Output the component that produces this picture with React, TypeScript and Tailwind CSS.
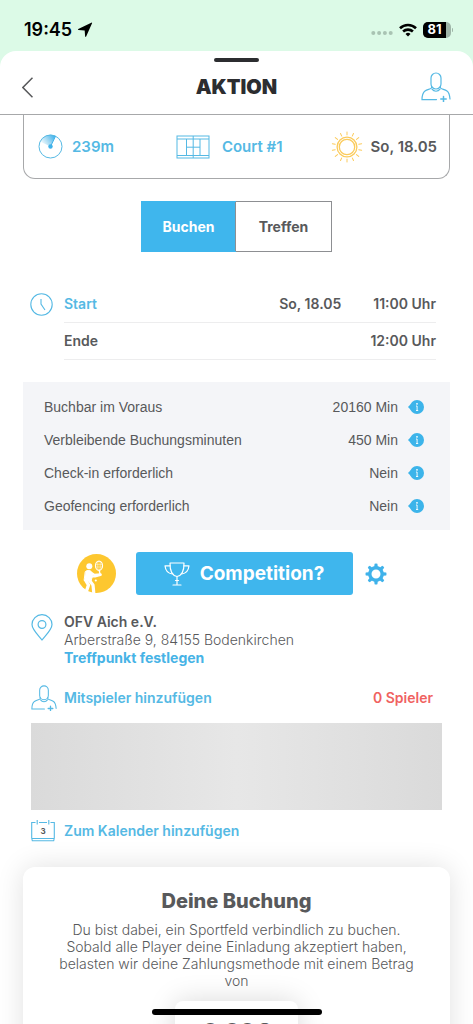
import { useState } from "react";
import type { ReactNode } from "react";

function StatusBar() {
  return (
    <div className="flex h-[51px] shrink-0 items-center justify-between pt-2 pr-5 pl-6 text-black">
      <div className="flex items-center gap-[5px]">
        <span className="text-[18px] font-semibold">19:45</span>
        <svg width="16" height="16" viewBox="0 0 15 15" aria-hidden="true">
          <path d="M14.2 .9 8.6 13.6Q8 14.6 7.6 13.3L7.2 8 1.5 7.6Q.2 7.2 1.2 6.6L13.4.7Q14.3.2 14.2.9Z" fill="#000" />
        </svg>
      </div>
      <div className="flex items-center gap-[6px]">
        <svg width="22" height="10" viewBox="0 0 22 10" aria-hidden="true" fill="#a9c3b3">
          <circle cx="2.300" cy="8" r="2" />
          <circle cx="8.100" cy="8" r="2" />
          <circle cx="13.900" cy="8" r="2" />
          <circle cx="19.700" cy="8" r="2" />
        </svg>
        <svg width="18" height="14" viewBox="0 0 18 14" aria-hidden="true" fill="none" stroke="#000" strokeWidth="2.6">
          <path d="M1 5.2a11.6 11.6 0 0 1 16 0" />
          <path d="M4.1 8.5a7.2 7.2 0 0 1 9.8 0" />
          <path d="M9 13.4 6.5 10.9a3.7 3.7 0 0 1 5 0Z" fill="#000" stroke="none" />
        </svg>
        <div className="flex items-center gap-px">
          <div className="flex h-4 w-7 overflow-hidden rounded-[5px] bg-[#9fb5a8]">
            <span className="flex w-[23px] items-center justify-center bg-black text-[13px] leading-none font-bold text-white">81</span>
          </div>
          <span className="h-1 w-px rounded-r bg-[#9fb5a8]" />
        </div>
      </div>
    </div>
  );
}

function PersonAddIcon({ className }: { className: string }) {
  return (
    <svg className={className} viewBox="0 0 30 30" fill="none" stroke="#55b9e4" strokeWidth="1.2" strokeLinecap="round" aria-hidden="true">
      <rect x="10" y="1" width="10" height="16" rx="5" />
      <path d="M10.6 14.2v1.6C9.6 17.4 6.500 17.2 4 19 1.800 20.800 1 23.500 1 27.600h14.500" />
      <path d="M19.400 14.200v1.600c1 1.600 4.100 1.400 6.600 3.200 1.800 1.300 2.700 4 3 8" />
      <path d="M11 17.200c2 2.700 6 2.700 8 0" />
      <path d="M22.500 24.500v5.200M19.800 27.100h5.400" strokeWidth="1.500" />
    </svg>
  );
}

function RadarIcon() {
  return (
    <svg width="25" height="25" viewBox="0 0 25 25" aria-hidden="true">
      <defs>
        <linearGradient id="sweep" x1="0" y1="0.700" x2="1" y2="0.200">
          <stop offset="0" stopColor="#55b9e4" stopOpacity="0" />
          <stop offset="1" stopColor="#3cb0ec" />
        </linearGradient>
      </defs>
      <path d="M12.500 12.500 2 7.500A11.600 11.600 0 0 1 17.600 2.100Z" fill="url(#sweep)" />
      <circle cx="12.500" cy="12.500" r="11.500" fill="none" stroke="#55b9e4" />
      <path d="M12.500 12.500 17.500 2.300" stroke="#3fb2ea" />
      <circle cx="12.500" cy="12.500" r="2.200" fill="#3fb2ea" />
    </svg>
  );
}

function CourtIcon() {
  return (
    <svg width="34" height="24" viewBox="0 0 34 24" fill="none" stroke="#55b9e4" aria-hidden="true">
      <rect x="1" y="1" width="32" height="22" />
      <path d="M1 4h32M1 20.500h32M10.500 4v16.500M24 4v16.500M17.200 1v22M10.500 12.200H24" />
    </svg>
  );
}

function SunIcon() {
  const rays = Array.from({ length: 14 }, (_, i) => (i * 360) / 14);
  return (
    <svg width="32" height="32" viewBox="0 0 32 32" fill="none" stroke="#fbcb5c" aria-hidden="true">
      <circle cx="16" cy="16" r="9.900" strokeWidth="1.300" />
      <circle cx="16" cy="16" r="7.700" strokeWidth="1.300" />
      {rays.map((a) => (
        <path key={a} d="M16 1v2.900" strokeLinecap="round" transform={`rotate(${a} 16 16)`} />
      ))}
    </svg>
  );
}

function ClockIcon() {
  return (
    <svg width="23" height="23" viewBox="0 0 23 23" fill="none" stroke="#55b9e4" strokeWidth="1.100" aria-hidden="true">
      <circle cx="11.500" cy="11.500" r="10.700" />
      <path d="M11 6v5l4 6" />
    </svg>
  );
}

function InfoIcon() {
  return (
    <svg width="16" height="14" viewBox="0 0 16 14" aria-hidden="true">
      <path d="M0 7 3.400 3.500v7Z" fill="#3cb4ea" />
      <circle cx="9" cy="7" r="7" fill="#3cb4ea" />
      <circle cx="9" cy="3.800" r=".9" fill="#fff" />
      <path d="M8 6h1.100v4.500M8 10.500h2.200" fill="none" stroke="#fff" strokeWidth=".9" />
    </svg>
  );
}

function PlayerIcon() {
  return (
    <svg width="39" height="39" viewBox="0 0 39 39" aria-hidden="true">
      <circle cx="19.500" cy="19.500" r="19.500" fill="#fdc72f" />
      <g stroke="#fff" fill="none" strokeLinecap="round" strokeLinejoin="round">
        <circle cx="12.300" cy="12.300" r="3" fill="#fff" stroke="none" />
        <path d="M8.500 17.500c2-1.800 5-1.300 6 .5l1.500 2.500-2 6.500-6.500-.5Z" fill="#fff" strokeWidth="1" />
        <path d="M13.500 18.500l4 2.500 6-.5" strokeWidth="2.500" />
        <path d="M14.500 22.500l3.500 0 5.500-1.500" strokeWidth="2" />
        <path d="M8.800 26.500 11.500 31l-1.700 5" strokeWidth="3.400" />
        <path d="M12.500 26.500l3.500 4.500.7 7" strokeWidth="3.200" />
        <ellipse cx="22" cy="11.700" rx="3.500" ry="4.600" strokeWidth="1.200" />
        <path d="M20.500 8.500v6.500M22 7.500v8M23.500 8.500v6.500M19 10.500h6M19 13h6" strokeWidth=".35" />
        <path d="M22.300 16.300l.8 5" strokeWidth="1.400" />
        <circle cx="18.800" cy="26.500" r="1.100" fill="#fff" stroke="none" />
      </g>
    </svg>
  );
}

function TrophyIcon() {
  return (
    <svg width="26" height="24" viewBox="0 0 26 24" fill="none" stroke="#fff" strokeWidth="1.200" strokeLinecap="round" strokeLinejoin="round" aria-hidden="true">
      <path d="M6 1h14c.1 6-1.700 12.500-7 13.500C7.700 13.500 5.900 7 6 1Z" />
      <path d="M6 3.800H1c.5 5 3.200 7.700 7.300 8.200M20 3.800h5c-.5 5-3.200 7.700-7.300 8.200" />
      <path d="M13 14.500V22M9 23h8M11.500 18.500h3" />
    </svg>
  );
}

function GearIcon() {
  const teeth = [0, 45, 90, 135, 180, 225, 270, 315];
  return (
    <svg width="22" height="22" viewBox="0 0 22 22" aria-hidden="true">
      <circle cx="11" cy="11" r="6.200" fill="none" stroke="#3fb2ea" strokeWidth="3.400" />
      {teeth.map((a) => (
        <path key={a} d="M9.200 4 9.600.8q1.400-.7 2.800 0L12.800 4Z" fill="#3fb2ea" transform={`rotate(${a} 11 11)`} />
      ))}
    </svg>
  );
}

function PinIcon() {
  return (
    <svg width="22" height="27" viewBox="0 0 22 27" fill="none" stroke="#55b9e4" strokeWidth="1.200" aria-hidden="true">
      <path d="M11 26C7 21 1 15.500 1 10.500a10 9.800 0 0 1 20 0C21 15.500 15 21 11 26Z" />
      <circle cx="11" cy="10.500" r="3.900" />
    </svg>
  );
}

function CalendarIcon() {
  return (
    <svg width="24" height="22" viewBox="0 0 24 22" fill="none" stroke="#55b9e4" strokeWidth="1.100" aria-hidden="true">
      <path d="M4.500 2.500H.7V18l.6 2.800h21.400l.6-2.800V2.500h-3.800M8 2.500h8M.7 18.500h22.600" />
      <path d="M6.200 0v4.500M17.800 0v4.500" />
      <text x="12" y="14" textAnchor="middle" fontSize="8" fontWeight="700" fill="#58595b" stroke="none">3</text>
    </svg>
  );
}

function InfoRow({ label, value }: { label: string; value: string }) {
  return (
    <div className="flex h-[33px] items-center">
      <dt className="grow">{label}</dt>
      <dd className="flex items-center gap-[10px]">
        {value}
        <button type="button" aria-label={`Info: ${label}`}>
          <InfoIcon />
        </button>
      </dd>
    </div>
  );
}

function IconRow({ icon, children }: { icon: ReactNode; children: ReactNode }) {
  return (
    <div className="flex items-center pr-10 pl-[31px]">
      <span className="flex w-[33px] shrink-0">{icon}</span>
      {children}
    </div>
  );
}

export default function App() {
  const [mode, setMode] = useState("Buchen");
  return (
    <div className="relative flex h-dvh flex-col overflow-hidden bg-[#dcfae7] font-['Inter',sans-serif] text-[14px] leading-5 text-[#58595b]">
      <StatusBar />
      <div className="flex min-h-0 grow flex-col rounded-t-2xl bg-white">
        <header className="flex h-16 shrink-0 flex-col border-b border-[#a7a8aa]">
          <span className="mx-auto mt-[7px] h-1 w-[45px] shrink-0 rounded-full bg-[#2c2d30]" />
          <div className="grid grow grid-cols-3 items-center px-[22px] pb-[2px]">
            <button type="button" aria-label="Zurück" className="justify-self-start">
              <svg width="11" height="21" viewBox="0 0 11 21" fill="none" stroke="#58595b" strokeWidth="1.500" aria-hidden="true">
                <path d="M10.500.7.9 10.500l9.600 9.800" />
              </svg>
            </button>
            <h1 className="text-center text-[20px] font-black text-[#2c2d30]">AKTION</h1>
            <button type="button" aria-label="Spieler hinzufügen" className="justify-self-end">
              <PersonAddIcon className="size-[30px]" />
            </button>
          </div>
        </header>

        <main className="min-h-0 grow overflow-y-auto [scrollbar-width:none]">
          <section className="mx-[23px] flex h-16 items-center justify-between rounded-b-xl border border-t-0 border-[#a7a8aa] pr-3 pl-[14px] text-[15px] font-semibold">
            <span className="flex items-center gap-[9px] text-[#55b9e4]"><RadarIcon />239m</span>
            <span className="flex items-center gap-3 pl-[14px] text-[#55b9e4]"><CourtIcon />Court #1</span>
            <span className="flex items-center gap-2"><SunIcon />So, 18.05</span>
          </section>

          <div className="mx-auto mt-[22px] flex h-[51px] w-[191px] border border-[#8d8f92] font-bold">
            {["Buchen", "Treffen"].map((name) => (
              <button
                key={name}
                type="button"
                aria-pressed={mode === name}
                onClick={() => setMode(name)}
                className={mode === name ? "-m-px grow basis-0 bg-[#3fb6ed] text-white" : "grow basis-0 border-l border-[#8d8f92]"}
              >
                {name}
              </button>
            ))}
          </div>

          <section className="mt-[34px] flex pr-[37px] pl-[30px] font-semibold">
            <span className="flex h-[37px] w-[34px] shrink-0 items-center"><ClockIcon /></span>
            <div className="grow">
              <div className="flex h-[37px] items-center border-b border-[#ededee]">
                <span className="grow text-[#55b9e4]">Start</span>
                <span>So, 18.05</span>
                <span className="ml-8">11:00 Uhr</span>
              </div>
              <div className="flex h-[37px] items-center justify-between border-b border-[#ededee]">
                <span>Ende</span>
                <span>12:00 Uhr</span>
              </div>
            </div>
          </section>

          <dl className="mx-[23px] mt-[22px] bg-[#f4f5f8] py-2 pr-[26px] pl-[21px] font-['Liberation_Sans',sans-serif]">
            <InfoRow label="Buchbar im Voraus" value="20160 Min" />
            <InfoRow label="Verbleibende Buchungsminuten" value="450 Min" />
            <InfoRow label="Check-in erforderlich" value="Nein" />
            <InfoRow label="Geofencing erforderlich" value="Nein" />
          </dl>

          <div className="mt-[22px] flex items-center justify-center pr-[10px]">
            <PlayerIcon />
            <button type="button" className="mr-3 ml-5 flex h-[43px] w-[217px] items-center justify-center gap-[10px] rounded-[3px] bg-[#3fb6ed] text-[19px] font-bold text-white">
              <TrophyIcon />
              Competition?
            </button>
            <button type="button" aria-label="Einstellungen"><GearIcon /></button>
          </div>

          <section className="mt-[18px] flex pr-10 pl-[31px] leading-[18px]">
            <span className="w-[33px] shrink-0 pt-px"><PinIcon /></span>
            <div>
              <p className="font-semibold">OFV Aich e.V.</p>
              <p className="font-light">Arberstraße 9, 84155 Bodenkirchen</p>
              <a href="#treffpunkt" className="block font-bold text-[#47b3e6]">Treffpunkt festlegen</a>
            </div>
          </section>

          <section className="mt-[18px]">
            <IconRow icon={<PersonAddIcon className="size-[26px]" />}>
              <button type="button" className="grow text-left font-semibold text-[#55b9e4]">Mitspieler hinzufügen</button>
              <span className="font-semibold text-[#f0625f]">0 Spieler</span>
            </IconRow>
            <div className="mx-[31px] mt-3 mb-[10px] h-[87px] bg-linear-to-r from-[#dadada] via-[#e7e7e7] to-[#dadada]" />
            <IconRow icon={<CalendarIcon />}>
              <button type="button" className="font-semibold text-[#55b9e4]">Zum Kalender hinzufügen</button>
            </IconRow>
          </section>

          <section className="mx-[23px] mt-[25px] rounded-xl bg-white px-7 pt-5 pb-10 text-center shadow-[0_0_28px_rgba(0,0,0,0.12)]">
            <h2 className="text-[20px] leading-7 font-extrabold">Deine Buchung</h2>
            <p className="mt-[6px] leading-[17px] font-light">
              Du bist dabei, ein Sportfeld verbindlich zu buchen. Sobald alle Player deine Einladung akzeptiert haben, belasten wir deine Zahlungsmethode mit einem Betrag von
            </p>
            <p className="mx-auto mt-3 w-[123px] rounded-lg bg-white py-3 text-[22px] leading-9 font-extrabold shadow-[0_0_28px_rgba(0,0,0,0.15)]">
              0,00€
            </p>
          </section>
        </main>
      </div>
      <span className="absolute bottom-[9px] left-1/2 h-[6px] w-[170px] -translate-x-1/2 rounded-full bg-black" />
    </div>
  );
}
